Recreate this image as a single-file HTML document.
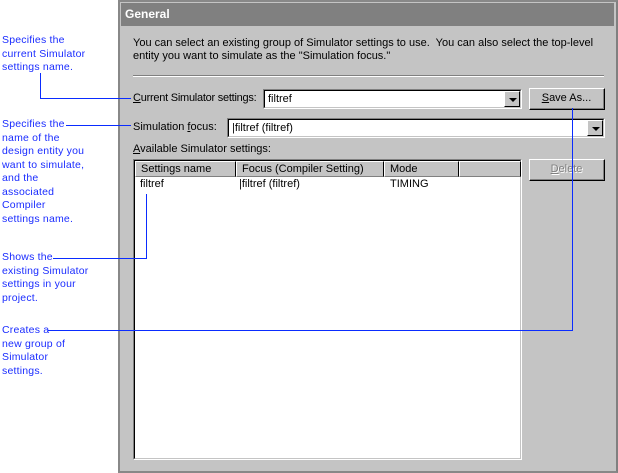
<!DOCTYPE html>
<html><head><style>
*{margin:0;padding:0;box-sizing:border-box}
body{width:618px;height:473px;background:#fff;position:relative;overflow:hidden;font-family:"Liberation Sans",Arial,sans-serif;font-size:11px}
.a{position:absolute}
.note{position:absolute;left:2px;color:#1a2cff;font-size:10.5px;line-height:13.5px;letter-spacing:0.2px}
.bl{position:absolute;background:#0a2cff}
.sunk{border-top:1px solid #808080;border-left:1px solid #808080;border-right:1px solid #fff;border-bottom:1px solid #fff}
.sunk>div{border-top:1px solid #000;border-left:1px solid #000;border-right:1px solid #c4c4c4;border-bottom:1px solid #c4c4c4;background:#fff;width:100%;height:100%;position:relative}
.btn{position:absolute;border-top:1px solid #fff;border-left:1px solid #fff;border-right:1px solid #000;border-bottom:1px solid #000;background:#c4c4c4;text-align:center}
.btn>div{border-right:1px solid #808080;border-bottom:1px solid #808080;height:100%;line-height:19px}
.dd{position:absolute;right:0;top:0;width:16px;height:100%;border-top:1px solid #fff;border-left:1px solid #fff;border-right:1px solid #000;border-bottom:1px solid #000;background:#c4c4c4}
.dd:after{content:"";position:absolute;left:4px;top:6px;border-left:4px solid transparent;border-right:4px solid transparent;border-top:4px solid #000}
.hd{position:absolute;top:0;height:16px;border-top:1px solid #fff;border-left:1px solid #fff;border-right:1px solid #000;border-bottom:1px solid #808080;background:#c4c4c4;line-height:14px;padding-left:5px}
</style></head><body>
<div class="a" style="left:118px;top:0;width:500px;height:473px;background:#c4c4c4;border:2px solid #888;border-right-color:#808080"></div>
<div class="a" style="left:121px;top:3px;width:493px;height:23px;background:#808080;color:#fff;font-weight:bold;font-size:12px;line-height:23px;padding-left:4px">General</div>
<div class="a" style="left:133px;top:37px;line-height:13px">You can select an existing group of Simulator settings to use.&nbsp; You can also select the top-level<br>entity you want to simulate as the "Simulation focus."</div>
<div class="a" style="left:133px;top:75px;width:471px;height:2px;border-top:1px solid #808080;border-bottom:1px solid #fff"></div>
<div class="a" style="left:133px;top:92px;letter-spacing:-0.25px"><u>C</u>urrent Simulator settings:</div>
<div class="a sunk" style="left:263px;top:89px;width:259px;height:20px"><div><span class="a" style="left:3px;top:2px">filtref</span><span class="dd"></span></div></div>
<div class="btn" style="left:529px;top:88px;width:76px;height:22px"><div><u>S</u>ave As...</div></div>
<div class="a" style="left:133px;top:121px">Simulation <u>f</u>ocus:</div>
<div class="a sunk" style="left:227px;top:118px;width:378px;height:20px"><div><span class="a" style="left:3px;top:2px">|filtref (filtref)</span><span class="dd"></span></div></div>
<div class="a" style="left:133px;top:143px"><u>A</u>vailable Simulator settings:</div>
<div class="a sunk" style="left:133px;top:159px;width:389px;height:301px"><div>
<div class="hd" style="left:0;width:101px">Settings name</div>
<div class="hd" style="left:101px;width:148px">Focus (Compiler Setting)</div>
<div class="hd" style="left:249px;width:75px">Mode</div>
<div class="hd" style="left:324px;width:62px"></div>
<span class="a" style="left:5px;top:17px">filtref</span>
<span class="a" style="left:104px;top:17px">|filtref (filtref)</span>
<span class="a" style="left:255px;top:17px">TIMING</span>
</div></div>
<div class="btn" style="left:529px;top:159px;width:76px;height:22px;color:#808080"><div style="text-shadow:1px 1px 0 #fff"><u>D</u>elete</div></div>

<div class="note" style="top:34px">Specifies the<br>current Simulator<br>settings name.</div>
<div class="note" style="top:118px">Specifies the<br>name of the<br>design entity you<br>want to simulate,<br>and the<br>associated<br>Compiler<br>settings name.</div>
<div class="note" style="top:251px">Shows the<br>existing Simulator<br>settings in your<br>project.</div>
<div class="note" style="top:324px">Creates a<br>new group of<br>Simulator<br>settings.</div>

<div class="bl" style="left:40px;top:73px;width:1px;height:26px"></div>
<div class="bl" style="left:40px;top:98px;width:91px;height:1px"></div>
<div class="bl" style="left:66px;top:125px;width:65px;height:1px"></div>
<div class="bl" style="left:53px;top:258px;width:94px;height:1px"></div>
<div class="bl" style="left:146px;top:194px;width:1px;height:65px"></div>
<div class="bl" style="left:48px;top:330px;width:525px;height:1px"></div>
<div class="bl" style="left:572px;top:108px;width:1px;height:223px"></div>
</body></html>
